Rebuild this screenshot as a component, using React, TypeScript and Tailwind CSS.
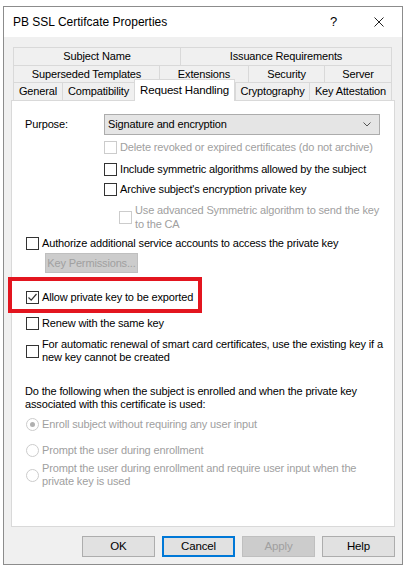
import React from 'react';

const Check = ({ checked = false, disabled = false }: { checked?: boolean; disabled?: boolean }) => (
    <span className={`w-[13px] h-[13px] shrink-0 border bg-white flex items-center justify-center ${disabled ? 'border-[#cccccc]' : 'border-[#333333]'}`}>
        {checked && (
            <svg width="11" height="11" viewBox="0 0 11 11">
                <path d="M1.5 5.5 L4.2 8.2 L9.5 2" fill="none" stroke="#333" strokeWidth="1.2" />
            </svg>
        )}
    </span>
);

const Radio = ({ checked = false }: { checked?: boolean }) => (
    <span className="w-[13px] h-[13px] shrink-0 rounded-full border border-[#cccccc] bg-white flex items-center justify-center">
        {checked && <span className="w-[5px] h-[5px] rounded-full bg-[#b0b0b0]" />}
    </span>
);

const Tab = ({ label, w, last = false }: { label: string; w: string; last?: boolean }) => (
    <div className={`${w} h-full flex items-center justify-center whitespace-nowrap border-t border-l border-[#d9d9d9] bg-[#f0f0f0] ${last ? 'border-r' : ''}`}>
        {label}
    </div>
);

const Button = ({ label, kind = 'normal' }: { label: string; kind?: 'normal' | 'default' | 'disabled' }) => {
    const style =
        kind === 'default'
            ? 'border-2 border-[#0078d7] bg-[#e1e1e1] text-black'
            : kind === 'disabled'
            ? 'border border-[#bfbfbf] bg-[#cccccc] text-[#a0a0a0]'
            : 'border border-[#adadad] bg-[#e1e1e1] text-black';
    return <div className={`w-[73px] h-[21px] flex items-center justify-center text-[11.5px] ${style}`}>{label}</div>;
};

export default function App() {
    return (
        <div className="w-[406px] h-[570px] bg-white overflow-hidden pt-[6px] pl-[3px] font-['Liberation_Sans',Arial,sans-serif] text-[11px] tracking-[-0.15px] text-black">
            <div className="w-[400px] h-[559px] border border-[#8c8c8c] bg-[#f0f0f0] flex flex-col">
                {/* title bar */}
                <div className="h-[30px] bg-white flex items-center pl-[9px] pr-[18px] shrink-0">
                    <span className="text-[12px] tracking-normal">PB SSL Certifcate Properties</span>
                    <span className="ml-auto text-[13px]">?</span>
                    <svg className="ml-[37px]" width="10" height="10" viewBox="0 0 10 10">
                        <path d="M0.5 0.5 L9.5 9.5 M9.5 0.5 L0.5 9.5" stroke="#222" strokeWidth="1" />
                    </svg>
                </div>

                <div className="flex-1 px-[7px] pt-[10px]">
                    {/* tabs */}
                    <div className="ml-[2px] w-[379px]">
                        <div className="flex h-[18px]">
                            <Tab label="Subject Name" w="w-[167px]" />
                            <Tab label="Issuance Requirements" w="w-[212px]" last />
                        </div>
                        <div className="flex h-[17px]">
                            <Tab label="Superseded Templates" w="w-[146px]" />
                            <Tab label="Extensions" w="w-[89px]" />
                            <Tab label="Security" w="w-[76px]" />
                            <Tab label="Server" w="w-[68px]" last />
                        </div>
                        <div className="flex h-[18px] items-end">
                            <Tab label="General" w="w-[49px]" />
                            <Tab label="Compatibility" w="w-[72px]" />
                            <div className="w-[101px] h-[22px] mb-[-1px] relative z-10 flex items-center justify-center whitespace-nowrap bg-white border-t border-l border-r border-[#d9d9d9] text-[11.5px]">
                                Request Handling
                            </div>
                            <Tab label="Cryptography" w="w-[74px]" />
                            <Tab label="Key Attestation" w="w-[83px]" last />
                        </div>
                    </div>

                    {/* panel */}
                    <div className="w-[384px] h-[427px] border border-[#d9d9d9] bg-white relative flex flex-col">
                        <div className="mt-[13px] h-[21px] flex items-center">
                            <span className="ml-[13px] w-[79px]">Purpose:</span>
                            <div className="w-[276px] h-full bg-[#e5e5e5] border border-[#acacac] flex items-center pl-[3px] pr-[8px]">
                                <span>Signature and encryption</span>
                                <svg className="ml-auto" width="8" height="5" viewBox="0 0 8 5">
                                    <path d="M0.5 0.5 L4 4 L7.5 0.5" fill="none" stroke="#555" strokeWidth="1" />
                                </svg>
                            </div>
                        </div>

                        <div className="mt-[4px] h-[16px] flex items-center ml-[92px] gap-[3px] text-[#a0a0a0]">
                            <Check disabled />
                            <span>Delete revoked or expired certificates (do not archive)</span>
                        </div>
                        <div className="mt-[6px] h-[16px] flex items-center ml-[92px] gap-[3px]">
                            <Check />
                            <span>Include symmetric algorithms allowed by the subject</span>
                        </div>
                        <div className="mt-[4px] h-[16px] flex items-center ml-[92px] gap-[3px]">
                            <Check />
                            <span>Archive subject's encryption private key</span>
                        </div>
                        <div className="mt-[6px] h-[28px] flex items-center ml-[107px] gap-[3px] text-[#a0a0a0] leading-[14px]">
                            <Check disabled />
                            <span className="whitespace-nowrap">
                                Use advanced Symmetric algorithm to send the key
                                <br />
                                to the CA
                            </span>
                        </div>

                        <div className="mt-[4px] h-[16px] flex items-center ml-[14px] gap-[3px]">
                            <Check />
                            <span>Authorize additional service accounts to access the private key</span>
                        </div>
                        <div className="mt-[2px] ml-[33px] w-[93px] h-[20px] bg-[#cccccc] border border-[#bfbfbf] text-[#a0a0a0] flex items-center justify-center whitespace-nowrap">
                            Key Permissions...
                        </div>

                        <div className="mt-[16px] h-[16px] flex items-center ml-[14px] gap-[3px]">
                            <Check checked />
                            <span>Allow private key to be exported</span>
                        </div>
                        <div className="mt-[10px] h-[16px] flex items-center ml-[14px] gap-[3px]">
                            <Check />
                            <span>Renew with the same key</span>
                        </div>
                        <div className="mt-[7px] h-[26px] flex items-center ml-[14px] gap-[3px] leading-[13px]">
                            <Check />
                            <span className="whitespace-nowrap">
                                For automatic renewal of smart card certificates, use the existing key if a
                                <br />
                                new key cannot be created
                            </span>
                        </div>

                        <div className="mt-[21px] h-[26px] ml-[13px] leading-[13px] whitespace-nowrap">
                            Do the following when the subject is enrolled and when the private key
                            <br />
                            associated with this certificate is used:
                        </div>
                        <div className="mt-[5px] h-[16px] flex items-center ml-[14px] gap-[3px] text-[#a0a0a0]">
                            <Radio checked />
                            <span>Enroll subject without requiring any user input</span>
                        </div>
                        <div className="mt-[10px] h-[16px] flex items-center ml-[14px] gap-[3px] text-[#a0a0a0]">
                            <Radio />
                            <span>Prompt the user during enrollment</span>
                        </div>
                        <div className="mt-[4px] h-[26px] flex items-center ml-[14px] gap-[3px] text-[#a0a0a0] leading-[13px]">
                            <Radio />
                            <span className="whitespace-nowrap">
                                Prompt the user during enrollment and require user input when the
                                <br />
                                private key is used
                            </span>
                        </div>

                        {/* highlight drawn over the screenshot */}
                        <div className="absolute left-[-4px] top-[176px] w-[194px] h-[36px] border-[4px] border-[#e3151f]" />
                    </div>

                    {/* buttons */}
                    <div className="mt-[9px] flex justify-end gap-[7px]">
                        <Button label="OK" />
                        <Button label="Cancel" kind="default" />
                        <Button label="Apply" kind="disabled" />
                        <Button label="Help" />
                    </div>
                </div>
            </div>
        </div>
    );
}
